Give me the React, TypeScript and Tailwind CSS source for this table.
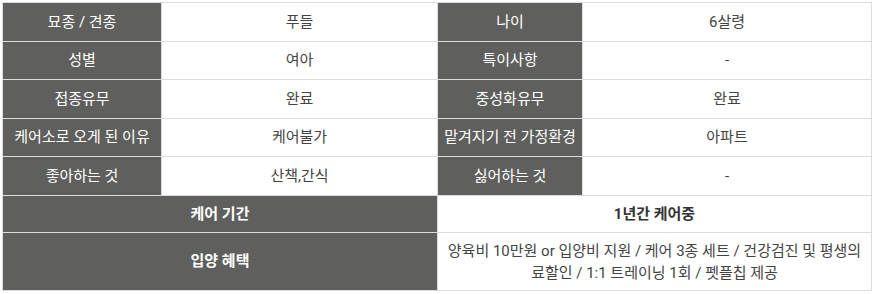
import React from "react";

const rows: [string, string, string, string][] = [
  ["묘종 / 견종", "푸들", "나이", "6살령"],
  ["성별", "여아", "특이사항", "-"],
  ["접종유무", "완료", "중성화유무", "완료"],
  ["케어소로 오게 된 이유", "케어불가", "맡겨지기 전 가정환경", "아파트"],
  ["좋아하는 것", "산책,간식", "싫어하는 것", "-"],
];

const heights = ["h-[38px]", "h-[37px]", "h-[38px]", "h-[37px]", "h-[38px]"];

export default function App() {
  return (
    <div
      className="w-[875px] h-[294px] bg-white pt-[2px] pl-[2px]"
      style={{ fontFamily: 'Roboto, "Noto Sans CJK KR", sans-serif' }}
    >
      <div className="w-[870px] bg-[#dcdcdc] p-px grid grid-cols-[158px_275px_144px_288px] gap-px text-[15px]">
        {rows.map((r, i) => (
          <React.Fragment key={i}>
            <div className={`${heights[i]} bg-[#5f605e] text-white flex items-center justify-center`}>{r[0]}</div>
            <div className={`${heights[i]} bg-white text-[#444] flex items-center justify-center`}>{r[1]}</div>
            <div className={`${heights[i]} bg-[#5f605e] text-white flex items-center justify-center`}>{r[2]}</div>
            <div className={`${heights[i]} bg-white text-[#444] flex items-center justify-center`}>{r[3]}</div>
          </React.Fragment>
        ))}
        <div className="col-span-2 h-[36px] bg-[#5f605e] text-white font-bold flex items-center justify-center">
          케어 기간
        </div>
        <div className="col-span-2 h-[36px] bg-white text-[#333] font-bold flex items-center justify-center">
          1년간 케어중
        </div>
        <div className="col-span-2 h-[57px] bg-[#5f605e] text-white font-bold flex items-center justify-center">
          입양 혜택
        </div>
        <div className="col-span-2 h-[57px] bg-white text-[#444] flex items-center justify-center text-center leading-[22px] px-2">
          양육비 10만원 or 입양비 지원 / 케어 3종 세트 / 건강검진 및 평생의료할인 / 1:1 트레이닝 1회 / 펫플칩 제공
        </div>
      </div>
    </div>
  );
}
